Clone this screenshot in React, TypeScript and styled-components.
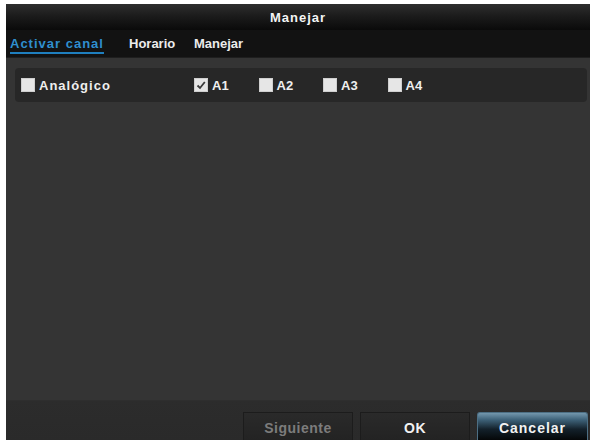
import React, { useState } from 'react'
import styled, { createGlobalStyle } from 'styled-components'

const GlobalStyle = createGlobalStyle`
  html, body {
    margin: 0;
    padding: 0;
    background: #ffffff;
  }
  body {
    font-family: 'Liberation Sans', Arial, sans-serif;
  }
`

const Page = styled.div`
  padding: 4px 3px 0 6px;
  height: 440px;
  box-sizing: border-box;
`

const Window = styled.div`
  display: flex;
  flex-direction: column;
  height: 436px;
  background: #343434;
  color: #f0f0f0;
`

const TitleBar = styled.div`
  height: 26px;
  display: flex;
  align-items: center;
  justify-content: center;
  background: linear-gradient(#2e2e2e, #1a1a1a 50%, #0a0a0a);
  font-size: 13px;
  font-weight: bold;
  letter-spacing: 1px;
  color: #f4f4f4;
`

const TabBar = styled.div`
  height: 27px;
  display: flex;
  align-items: center;
  gap: 0;
  padding-left: 4px;
  background: #121212;
  border-bottom: 1px solid #1e1e1e;
`

const Tab = styled.div<{ $active?: boolean; $width: number }>`
  width: ${(p) => p.$width}px;
  height: 27px;
  box-sizing: border-box;
  display: flex;
  align-items: center;
  font-size: 13px;
  font-weight: bold;
  letter-spacing: ${(p) => (p.$active ? '1px' : '0')};
  color: ${(p) => (p.$active ? '#2f8fcf' : '#ececec')};
  cursor: pointer;
  span {
    padding: 2px 0 1px;
    border-bottom: 2px solid ${(p) => (p.$active ? '#1f7fbf' : 'transparent')};
  }
`

const Content = styled.div`
  flex: 1;
  padding: 10px 3px 0 9px;
`

const Row = styled.div`
  height: 34px;
  display: flex;
  align-items: center;
  padding-left: 6px;
  background: #272727;
  border-radius: 4px;
`

const Item = styled.label<{ $width: number }>`
  width: ${(p) => p.$width}px;
  display: flex;
  align-items: center;
  gap: 4px;
  cursor: pointer;
`

const Box = styled.span<{ $checked?: boolean }>`
  width: 14px;
  height: 14px;
  box-sizing: border-box;
  background: #e6e6e6;
  border: 1px solid #cfcfcf;
  display: flex;
  align-items: center;
  justify-content: center;
`

const Label = styled.span<{ $wide?: boolean }>`
  font-size: 13px;
  font-weight: bold;
  letter-spacing: ${(p) => (p.$wide ? '1px' : '0')};
  color: #efefef;
`

const Footer = styled.div`
  height: 40px;
  box-sizing: border-box;
  display: flex;
  justify-content: flex-end;
  align-items: flex-end;
  gap: 7px;
  padding: 12px 2px 0 0;
  background: linear-gradient(#2c2c2c, #2a2a2a);
  border-top: 1px solid #2e2e2e;
`

const Button = styled.button<{ $primary?: boolean; $disabled?: boolean }>`
  width: ${(p) => (p.$primary ? '111px' : '110px')};
  height: 28px;
  font-family: 'Liberation Sans', Arial, sans-serif;
  font-size: 14px;
  font-weight: bold;
  letter-spacing: ${(p) => (p.$primary ? '1px' : '0.5px')};
  color: ${(p) => (p.$disabled ? '#7c7c7c' : '#f2f2f2')};
  border: 1px solid ${(p) => (p.$primary ? '#4d6f84' : '#1c1c1c')};
  border-bottom: none;
  border-radius: ${(p) => (p.$primary ? '3px 3px 0 0' : '0')};
  background: ${(p) =>
    p.$primary
      ? 'linear-gradient(#7397ad, #3e6279 25%, #13212b 60%, #050708)'
      : 'linear-gradient(#2a2a2a, #232323)'};
  padding: 2px 0 0;
  cursor: pointer;
  :focus {
    outline: none;
  }
`

const Check = () => (
  <svg width='10' height='10' viewBox='0 0 10 10'>
    <path d='M1.5 5.5 L4 8 L8.8 2' fill='none' stroke='#3a3a3a' strokeWidth='1.8' />
  </svg>
)

const tabs = [
  { name: 'Activar canal', width: 119 },
  { name: 'Horario', width: 65 },
  { name: 'Manejar', width: 60 },
]

const channels = ['A1', 'A2', 'A3', 'A4']

export default function App() {
  const [active, setActive] = useState(0)
  const [checked, setChecked] = useState<Record<string, boolean>>({ A1: true })

  const toggle = (key: string) => setChecked((c) => ({ ...c, [key]: !c[key] }))

  return (
    <>
      <GlobalStyle />
      <Page>
        <Window>
          <TitleBar>Manejar</TitleBar>
          <TabBar>
            {tabs.map((t, i) => (
              <Tab key={t.name} $width={t.width} $active={i === active} onClick={() => setActive(i)}>
                <span>{t.name}</span>
              </Tab>
            ))}
          </TabBar>
          <Content>
            <Row>
              <Item $width={173} onClick={() => toggle('analog')}>
                <Box $checked={checked.analog}>{checked.analog && <Check />}</Box>
                <Label $wide>Analógico</Label>
              </Item>
              {channels.map((c) => (
                <Item key={c} $width={64.5} onClick={() => toggle(c)}>
                  <Box $checked={checked[c]}>{checked[c] && <Check />}</Box>
                  <Label>{c}</Label>
                </Item>
              ))}
            </Row>
          </Content>
          <Footer>
            <Button $disabled>Siguiente</Button>
            <Button>OK</Button>
            <Button $primary>Cancelar</Button>
          </Footer>
        </Window>
      </Page>
    </>
  )
}
